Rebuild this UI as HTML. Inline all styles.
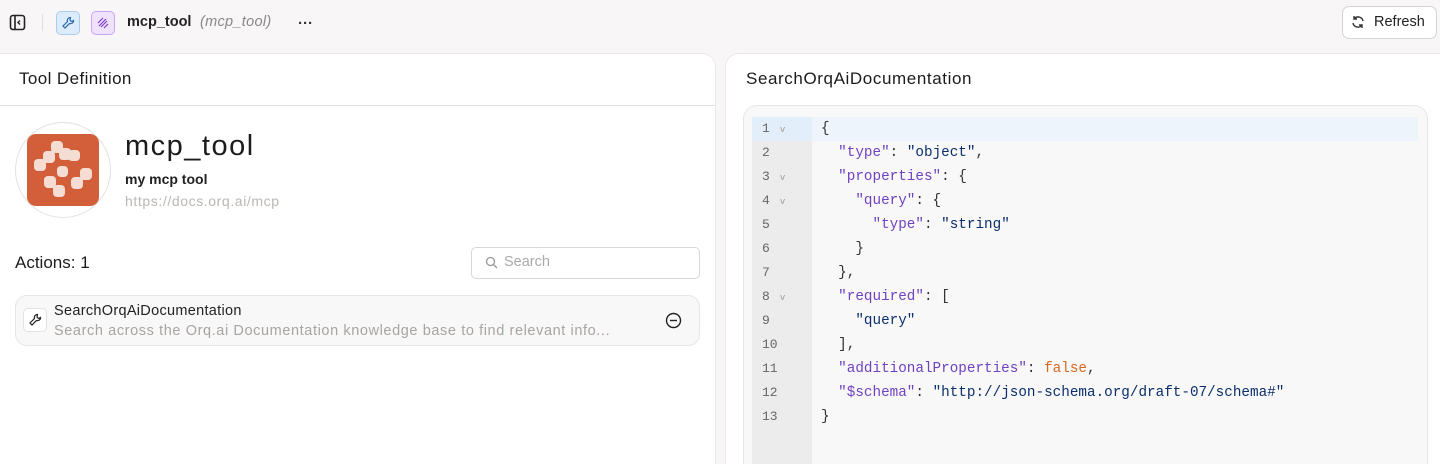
<!DOCTYPE html>
<html style="overflow:hidden"><head><style>
*{box-sizing:border-box;margin:0;padding:0}
html,body{width:1440px;height:464px;overflow:hidden}
body{background:#f8f6f6;font-family:"Liberation Sans",sans-serif;color:#1c1c1c;position:relative}
.abs{position:absolute}
.panel{position:absolute;background:#fff;border:1px solid #ebe8e6;border-bottom:none;top:53px;height:411px;overflow:hidden}
.mono{font-family:"Liberation Mono",monospace;font-size:14.3px}
.ln{position:absolute;left:0;width:60px;height:24px;line-height:24px;font-family:"Liberation Mono",monospace;font-size:13px;color:#666;padding-left:10px}
.ln i{font-style:normal;font-size:9px;color:#999;margin-left:10px}
.cl{position:absolute;left:69px;height:24px;line-height:24px;white-space:pre;color:#333}
.k{color:#6f42c1}.s{color:#0a2f6b}.b{color:#d9661e}
</style></head><body>
<svg class="abs" style="left:9px;top:14px" width="17" height="17" viewBox="0 0 17 17"><rect x="1.5" y="1.5" width="14" height="14" rx="2.5" fill="none" stroke="#222" stroke-width="1.6"/><line x1="6" y1="1.5" x2="6" y2="15.5" stroke="#222" stroke-width="1.6"/><path d="M11 6.5 L9 8.5 L11 10.5" fill="none" stroke="#222" stroke-width="1.4"/></svg>
<div class="abs" style="left:42px;top:14px;width:1px;height:17px;background:#e2dfdd"></div>
<div class="abs" style="left:56px;top:11px;width:24px;height:24px;border-radius:5px;background:#dcecfb;border:1px solid #a8cdef"></div>
<svg class="abs" style="left:61px;top:16px" width="14" height="14" viewBox="0 0 14 14"><path d="M9.5 1.5a3 3 0 0 0-3 4L2 10l2 2 4.5-4.5a3 3 0 0 0 4-3l-2 1-1.5-1.5z" fill="none" stroke="#2a6db0" stroke-width="1.2"/></svg>
<div class="abs" style="left:91px;top:11px;width:24px;height:24px;border-radius:5px;background:#efe3fb;border:1px solid #c6a6ee"></div>
<svg class="abs" style="left:96px;top:16px" width="14" height="14" viewBox="0 0 14 14"><path d="M2 7l5-5M3 10l7-7M5 11l6-6M8 12l4-4" stroke="#7a3fc6" stroke-width="1.2" fill="none"/></svg>
<div class="abs" style="left:127px;top:14px;font-size:14.5px;font-weight:bold;color:#222">mcp_tool</div>
<div class="abs" style="left:200px;top:14px;font-size:14.5px;font-style:italic;color:#888;letter-spacing:0.3px">(mcp_tool)</div>
<div class="abs" style="left:298px;top:15px;font-size:15px;font-weight:bold;color:#333">···</div>
<div class="abs" style="left:1342px;top:6px;width:95px;height:33px;border:1px solid #d6d3d1;border-radius:7px;background:#fff"></div>
<svg class="abs" style="left:1351px;top:15px" width="14" height="14" viewBox="0 0 14 14"><path d="M12 6A5 5 0 0 0 3 4M2 8a5 5 0 0 0 9 2" fill="none" stroke="#333" stroke-width="1.4"/><path d="M3 1v3h3M11 13v-3H8" fill="none" stroke="#333" stroke-width="1.4"/></svg>
<div class="abs" style="left:1374px;top:14px;font-size:14.5px;color:#222">Refresh</div>

<div class="panel" style="left:-1px;width:717px;border-top-right-radius:14px">
  <div class="abs" style="left:19px;top:15px;font-size:17px;letter-spacing:0.4px;color:#1c1c1c">Tool Definition</div>
  <div class="abs" style="left:0;top:51px;width:716px;height:1px;background:#e2dfdd"></div>
  <div class="abs" style="left:15px;top:68px;width:96px;height:96px;border-radius:50%;border:1px solid #e5e2e0"></div>
  <div class="abs" style="left:27px;top:80px;width:72px;height:72px;border-radius:9px;background:#d35f3a"></div>
  <svg class="abs" style="left:27px;top:80px" width="72" height="72" viewBox="0 0 72 72"><g fill="#f5ddd4"><rect x="24" y="7" width="12" height="12" rx="4"/><rect x="32" y="14" width="12" height="12" rx="4"/><rect x="41" y="16" width="12" height="11" rx="4"/><rect x="16" y="17" width="12" height="12" rx="4"/><rect x="7" y="25" width="12" height="12" rx="4"/><rect x="30" y="32" width="11" height="11" rx="4"/><rect x="53" y="34" width="12" height="12" rx="4"/><rect x="44" y="43" width="12" height="12" rx="4"/><rect x="17" y="42" width="12" height="12" rx="4"/><rect x="26" y="51" width="12" height="12" rx="4"/></g></svg>
  <div class="abs" style="left:125px;top:76px;font-size:29px;letter-spacing:1.5px;color:#1c1c1c">mcp_tool</div>
  <div class="abs" style="left:125px;top:117px;font-size:14px;font-weight:bold;color:#222">my mcp tool</div>
  <div class="abs" style="left:125px;top:139px;font-size:14px;letter-spacing:0.6px;color:#bbb6b2">https://docs.orq.ai/mcp</div>
  <div class="abs" style="left:15px;top:199px;font-size:17px;color:#1c1c1c">Actions: 1</div>
  <div class="abs" style="left:471px;top:193px;width:229px;height:32px;border:1px solid #d9d6d4;border-radius:5px"></div>
  <svg class="abs" style="left:485px;top:202px" width="13" height="13" viewBox="0 0 13 13"><circle cx="5.5" cy="5.5" r="4" fill="none" stroke="#999" stroke-width="1.3"/><line x1="8.5" y1="8.5" x2="12" y2="12" stroke="#999" stroke-width="1.3"/></svg>
  <div class="abs" style="left:504px;top:200px;font-size:14.5px;color:#aaa">Search</div>
  <div class="abs" style="left:15px;top:241px;width:685px;height:51px;border:1px solid #e8e5e2;border-radius:12px;background:#f9f8f8"></div>
  <div class="abs" style="left:23px;top:254px;width:24px;height:24px;border:1px solid #e5e2e0;border-radius:5px;background:#fff"></div>
  <svg class="abs" style="left:28px;top:259px" width="14" height="14" viewBox="0 0 14 14"><path d="M9.5 1.5a3 3 0 0 0-3 4L2 10l2 2 4.5-4.5a3 3 0 0 0 4-3l-2 1-1.5-1.5z" fill="none" stroke="#222" stroke-width="1.2"/></svg>
  <div class="abs" style="left:54px;top:249px;font-size:14.5px;letter-spacing:0.3px;color:#222">SearchOrqAiDocumentation</div>
  <div class="abs" style="left:54px;top:269px;font-size:14.5px;letter-spacing:0.6px;color:#a8a4a1">Search across the Orq.ai Documentation knowledge base to find relevant info...</div>
  <svg class="abs" style="left:665px;top:258px" width="17" height="17" viewBox="0 0 17 17"><circle cx="8.5" cy="8.5" r="7" fill="none" stroke="#222" stroke-width="1.4"/><line x1="5" y1="8.5" x2="12" y2="8.5" stroke="#222" stroke-width="1.4"/></svg>
</div>

<div class="panel" style="left:725px;width:716px;border-top-left-radius:14px;border-right:none">
  <div class="abs" style="left:20px;top:15px;font-size:17px;letter-spacing:0.6px;color:#1c1c1c">SearchOrqAiDocumentation</div>
  <div class="abs" style="left:17px;top:51px;width:685px;height:360px;border:1px solid #e8e5e2;border-bottom:none;border-radius:14px 14px 0 0;background:#f9f8f8;overflow:hidden">
    <div class="abs" style="left:8px;top:11px;width:60px;height:349px;background:#ececec"></div>
    <div class="abs" style="left:8px;top:11px;width:666px;height:24px;background:#eef4fc"></div>
    <div class="abs" style="left:8px;top:11px;width:60px;height:24px;background:#e2eefa"></div>
    <div class="abs mono" style="left:8px;top:11px;width:670px;height:320px">
      <div class="ln" style="top:0">1<i>v</i></div><div class="cl" style="top:0">{</div>
      <div class="ln" style="top:24px">2</div><div class="cl" style="top:24px">  <span class="k">"type"</span>: <span class="s">"object"</span>,</div>
      <div class="ln" style="top:48px">3<i>v</i></div><div class="cl" style="top:48px">  <span class="k">"properties"</span>: {</div>
      <div class="ln" style="top:72px">4<i>v</i></div><div class="cl" style="top:72px">    <span class="k">"query"</span>: {</div>
      <div class="ln" style="top:96px">5</div><div class="cl" style="top:96px">      <span class="k">"type"</span>: <span class="s">"string"</span></div>
      <div class="ln" style="top:120px">6</div><div class="cl" style="top:120px">    }</div>
      <div class="ln" style="top:144px">7</div><div class="cl" style="top:144px">  },</div>
      <div class="ln" style="top:168px">8<i>v</i></div><div class="cl" style="top:168px">  <span class="k">"required"</span>: [</div>
      <div class="ln" style="top:192px">9</div><div class="cl" style="top:192px">    <span class="s">"query"</span></div>
      <div class="ln" style="top:216px">10</div><div class="cl" style="top:216px">  ],</div>
      <div class="ln" style="top:240px">11</div><div class="cl" style="top:240px">  <span class="k">"additionalProperties"</span>: <span class="b">false</span>,</div>
      <div class="ln" style="top:264px">12</div><div class="cl" style="top:264px">  <span class="k">"$schema"</span>: <span class="s">"http://json-schema.org/draft-07/schema#"</span></div>
      <div class="ln" style="top:288px">13</div><div class="cl" style="top:288px">}</div>
    </div>
  </div>
</div>
</body></html>
